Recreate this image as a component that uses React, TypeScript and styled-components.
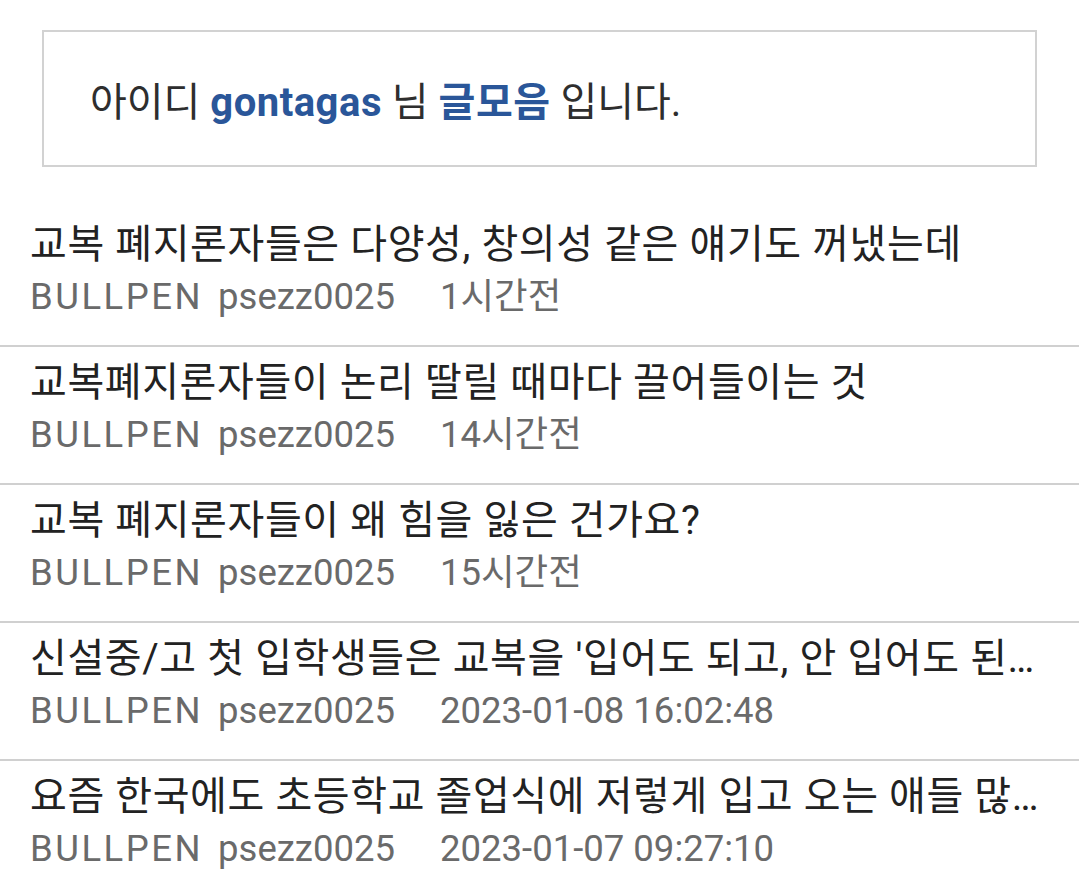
import React from "react";
import styled, { createGlobalStyle } from "styled-components";

const GlobalStyle = createGlobalStyle`
    html, body {
        margin: 0;
        padding: 0;
        background: #ffffff;
    }
    body {
        font-family: Roboto, "Noto Sans CJK KR", "Noto Sans", sans-serif;
        color: #222222;
    }
`;

interface Post {
    title: string;
    board: string;
    author: string;
    time: string;
}

const posts: Post[] = [
    { title: "교복 폐지론자들은 다양성, 창의성 같은 얘기도 꺼냈는데", board: "BULLPEN", author: "psezz0025", time: "1시간전" },
    { title: "교복폐지론자들이 논리 딸릴 때마다 끌어들이는 것", board: "BULLPEN", author: "psezz0025", time: "14시간전" },
    { title: "교복 폐지론자들이 왜 힘을 잃은 건가요?", board: "BULLPEN", author: "psezz0025", time: "15시간전" },
    { title: "신설중/고 첫 입학생들은 교복을 '입어도 되고, 안 입어도 된다'는 얘기를 들었다는데", board: "BULLPEN", author: "psezz0025", time: "2023-01-08 16:02:48" },
    { title: "요즘 한국에도 초등학교 졸업식에 저렇게 입고 오는 애들 많나요?", board: "BULLPEN", author: "psezz0025", time: "2023-01-07 09:27:10" },
];

const Page = styled.div`
    width: 1079px;
    min-height: 884px;
    padding-top: 30px;
    box-sizing: border-box;
`;

const IntroBox = styled.div`
    margin: 0 42px;
    height: 137px;
    box-sizing: border-box;
    border: 2px solid #d2d2d2;
    display: flex;
    align-items: center;
    padding-left: 46px;
    font-size: 40px;
    color: #2e2e2e;
`;

const Highlight = styled.strong`
    color: #2a5699;
    font-weight: 700;
    letter-spacing: 0.5px;
`;

const PostList = styled.ul`
    list-style: none;
    margin: 42px 0 0;
    padding: 0;
`;

const PostRow = styled.li`
    padding: 12px 30px 20px;
    border-bottom: 2px solid #d0d0d0;
`;

const Title = styled.div`
    font-size: 40px;
    line-height: 48px;
    letter-spacing: 0.6px;
    color: #222222;
    white-space: nowrap;
    overflow: hidden;
    text-overflow: ellipsis;
    padding-right: 8px;
`;

const Meta = styled.div`
    font-size: 36.5px;
    line-height: 56px;
    color: #6a6a6a;
    display: flex;
    align-items: baseline;
    white-space: nowrap;
`;

const MetaItem = styled.span<{ $gap: number; $spacing?: number }>`
    margin-right: ${(p) => p.$gap}px;
    letter-spacing: ${(p) => p.$spacing ?? 0}px;
`;

export default function App() {
    return (
        <Page>
            <GlobalStyle />
            <IntroBox>
                <span>
                    아이디 <Highlight>gontagas</Highlight> 님 <Highlight>글모음</Highlight> 입니다.
                </span>
            </IntroBox>
            <PostList>
                {posts.map((post, i) => (
                    <PostRow key={i}>
                        <Title>{post.title}</Title>
                        <Meta>
                            <MetaItem $gap={15} $spacing={2.5}>{post.board}</MetaItem>
                            <MetaItem $gap={45}>{post.author}</MetaItem>
                            <MetaItem $gap={0}>{post.time}</MetaItem>
                        </Meta>
                    </PostRow>
                ))}
            </PostList>
        </Page>
    );
}
